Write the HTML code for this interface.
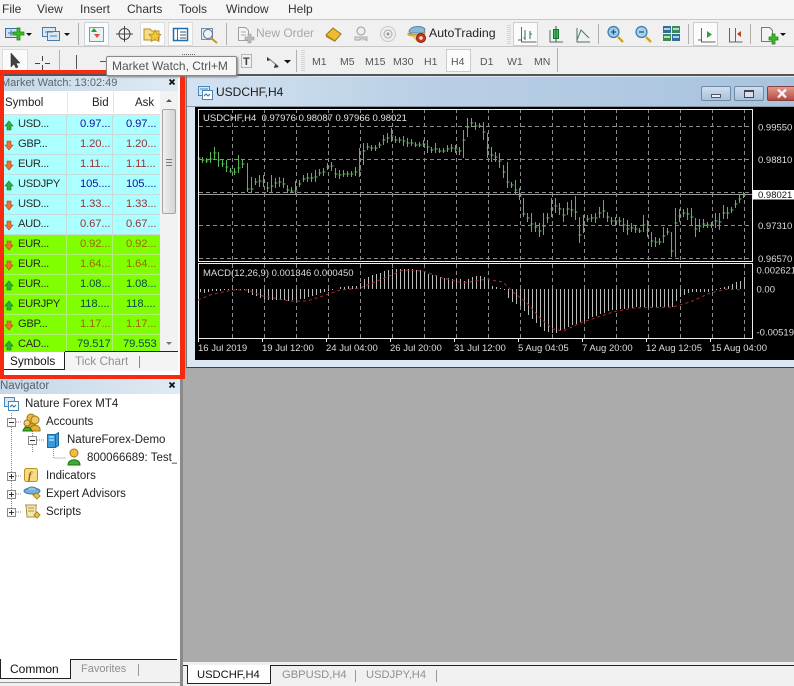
<!DOCTYPE html>
<html><head><meta charset="utf-8"><style>
html,body{margin:0;padding:0}
body{width:794px;height:686px;overflow:hidden;position:relative;background:#f0f0f0;font-family:"Liberation Sans",sans-serif;font-size:12px;color:#222}
.a{position:absolute}
.t{position:absolute;white-space:nowrap;line-height:14px}
.g{color:#8f8f8f}
.n{font-size:11.5px}
.row{position:absolute;left:4px;width:156px;height:20px;box-sizing:border-box;border-bottom:1px solid #c4dcdc}
.row i{position:absolute;top:0;bottom:-1px;width:1px;background:#c4dcdc}
.row span{position:absolute;top:2px;line-height:15px;white-space:nowrap;font-size:11.2px;letter-spacing:-.1px}
.row span:nth-of-type(1){letter-spacing:-.35px;color:#2a2a2a}
.c{background:#aaffff}
.l{background:#80ff00;border-bottom-color:#b0f070}
.l i{background:#b0f070}
.tm{font-size:12px;color:#333}
.fr{font-size:10.5px;color:#555}
</style></head><body>

<!-- menu -->
<div class="a" style="left:0;top:0;width:794px;height:19px;background:#f5f5f5"></div>
<div class="t tm" style="left:2px;top:2px">File</div>
<div class="t tm" style="left:37px;top:2px">View</div>
<div class="t tm" style="left:80px;top:2px">Insert</div>
<div class="t tm" style="left:127px;top:2px">Charts</div>
<div class="t tm" style="left:179px;top:2px">Tools</div>
<div class="t tm" style="left:226px;top:2px">Window</div>
<div class="t tm" style="left:288px;top:2px">Help</div>
<div class="a" style="left:0;top:19px;width:794px;height:1px;background:#c8c8c8"></div>
<div class="a" style="left:0;top:46px;width:794px;height:1px;background:#c8c8c8"></div>
<div class="a" style="left:0;top:74px;width:794px;height:2px;background:#555"></div>

<!-- toolbar svg -->
<svg class="a" style="left:0;top:0" width="794" height="76" viewBox="0 0 794 76">
<g fill="none" stroke-width="1">
<rect x="84.500" y="22.500" width="24" height="23" fill="#fbfbfb" stroke="#c9d6dd"/>
<rect x="140.500" y="22.500" width="24" height="23" fill="#fbfbfb" stroke="#ddd"/>
<rect x="168.500" y="22.500" width="24" height="23" fill="#fbfbfb" stroke="#ddd"/>
<rect x="513.500" y="22.500" width="24" height="23" fill="#fbfbfb" stroke="#ccc"/>
<rect x="693.500" y="22.500" width="24" height="23" fill="#fbfbfb" stroke="#ccc"/>
<rect x="446.500" y="49.500" width="24" height="22" fill="#fbfbfb" stroke="#ccc"/>
<rect x="2.500" y="49.500" width="25" height="23" fill="#fbfbfb" stroke="#ddd"/>
<path d="M78.500 23v22M226.500 23v22M598.500 24v20M688.500 24v20M750.500 24v20M59.500 50v22M296.500 50v22M557.500 48v24" stroke="#b0b0b0"/>
</g>
<rect x="5.500" y="28.500" width="13" height="9" fill="#cfe0f0" stroke="#3a72a8"/>
<path d="M8 33h8M11 30v6" stroke="#3a72a8"/>
<path d="M17 28h3v4h4v3h-4v5h-3v-5h-4v-3h4z" fill="#38c020" stroke="#1b7a10" stroke-width=".7"/>
<path d="M26 33h6l-3 3z" fill="#111"/>
<rect x="42.500" y="27.500" width="13" height="9" fill="#dbe7f2" stroke="#4b7bad"/>
<rect x="47.500" y="31.500" width="12" height="9" fill="#dbe7f2" stroke="#4b7bad"/>
<path d="M45 32h8M50 36h7" stroke="#4b7bad"/>
<path d="M64 33h6l-3 3z" fill="#111"/>
<rect x="89.500" y="27.500" width="14" height="14" fill="#e8f1f8" stroke="#7c9ab5"/>
<path d="M94 28l3 4h-6z" fill="#20a030"/><path d="M97 38l3-4h-6z" fill="#e05020"/>
<circle cx="124.500" cy="34" r="5.500" fill="none" stroke="#444"/>
<path d="M124.500 26v16M116 34h17" stroke="#444"/>
<path d="M144 29h6l2 2h7v9h-15z" fill="#f6dc80" stroke="#b29030"/>
<path d="M155 30l2 4 4 .5-3 3 1 4-4-2-4 2 1-4-3-3 4-.5z" fill="#f0c830" stroke="#a88520" stroke-width=".7"/>
<rect x="173.500" y="28.500" width="14" height="12" fill="#fff" stroke="#1f6fb0" stroke-width="1.500"/>
<path d="M177.500 29v11" stroke="#1f6fb0"/><path d="M180 32h6M180 35h6M180 38h6" stroke="#456"/>
<rect x="201.500" y="28.500" width="11" height="11" fill="#dde6ef" stroke="#7c8da0"/>
<circle cx="208" cy="34" r="4.500" fill="#eef3f8" stroke="#5a7590"/>
<path d="M211 38l6 5" stroke="#c49a20" stroke-width="2"/>
<path d="M238.500 27.500h7l3 3v10h-10z" fill="#f4f4f4" stroke="#a0a0a0"/>
<path d="M241 32h5M241 35h5" stroke="#aaa"/>
<path d="M245 37h3v-3h3v3h3v3h-3v3h-3v-3h-3z" fill="#bbb" stroke="#999" stroke-width=".6"/>
<path d="M326 35l7-7 8 6-6 7z" fill="#eebc30" stroke="#9a7418"/>
<path d="M326 35l9 6 0 1-9-5z" fill="#b08820"/>
<circle cx="361" cy="31" r="4" fill="#eee" stroke="#999"/>
<path d="M355 37h12v3h-12z" fill="#ddd" stroke="#aaa"/>
<path d="M358 41c2-3 7-3 9 0" fill="#e5e5e5" stroke="#aaa"/>
<circle cx="388" cy="34" r="7.500" fill="#eee" stroke="#c8c8c8"/>
<circle cx="388" cy="34" r="4" fill="none" stroke="#aaa"/>
<circle cx="388" cy="34" r="1.500" fill="#999"/>
<path d="M409 31c2-5 12-6 16-2l-1 4h-14z" fill="#8db8d8" stroke="#5b85a8"/>
<path d="M408 33c5 2 12 2 17-1v2c-5 3-12 3-17 1z" fill="#e2b84a" stroke="#a88420" stroke-width=".6"/>
<path d="M412 36l5 6 4-3-3-4z" fill="#e8c860"/>
<circle cx="421" cy="38" r="4.500" fill="#c83820" stroke="#882010"/>
<circle cx="421" cy="38" r="1.800" fill="#f5e5e0"/>
<path d="M508 25v19M510 25v19" stroke="#bbb" stroke-dasharray="1 1"/>
<path d="M302 50v21M304 50v21" stroke="#bbb" stroke-dasharray="1 1"/>
<path d="M521.500 27v15h15M518 40h3" stroke="#5a6a60" fill="none"/>
<path d="M525 30v10M523.500 38h2M530 31v8M530 34h2" stroke="#2f7050" fill="none"/>
<path d="M550 30v12h13" stroke="#5a6a60" fill="none"/>
<rect x="553.500" y="29.500" width="5" height="9" fill="#38c050" stroke="#1a7030"/>
<path d="M556 26v16" stroke="#1a7030"/>
<path d="M577 28v14h13" stroke="#5a6a60" fill="none"/>
<path d="M577 40l4-10 8 8" stroke="#3a8060" fill="none"/>
<circle cx="613.500" cy="32" r="5.500" fill="#9ccbe8" stroke="#3b78ac" stroke-width="1.200"/>
<path d="M611 32h5M613.500 29.500v5" stroke="#1a5a90" stroke-width="1.300"/>
<path d="M618 37l5 5" stroke="#cda526" stroke-width="2.400"/>
<circle cx="641.500" cy="32" r="5.500" fill="#a8d0e8" stroke="#3b78ac" stroke-width="1.200"/>
<path d="M639 32h5" stroke="#1a5a90" stroke-width="1.300"/>
<path d="M646 37l5 5" stroke="#cda526" stroke-width="2.400"/>
<rect x="663" y="26" width="8" height="7" fill="#2f6f9a"/><rect x="672" y="26" width="8" height="7" fill="#3a8a5a"/>
<rect x="663" y="34" width="8" height="7" fill="#3f8a50"/><rect x="672" y="34" width="8" height="7" fill="#2f6f9a"/>
<path d="M664 29h6M673 29h6M664 37h6M673 37h6" stroke="#e8f0f4" stroke-width="1.500"/>
<path d="M701.500 28v14h14M698 40h3" stroke="#5a6a60" fill="none"/>
<path d="M707 31l5 3.500-5 3.500z" fill="#30a040"/>
<path d="M729.500 28v14h13M735.500 28v14" stroke="#5a6a60" fill="none"/>
<path d="M741 31l-4 3 4 3z" fill="#b84020"/>
<path d="M761.500 27.500h8l3 3v11h-11z" fill="#f3f3f3" stroke="#777"/>
<path d="M769 36h3v-3h3v3h3v3h-3v4h-3v-4h-3z" fill="#38c020" stroke="#1b7a10" stroke-width=".7" transform="translate(0,1)"/>
<path d="M780 33h6l-3 3z" fill="#111"/>
<path d="M11 53v14l3-3 2 4 2-1-2-4h4z" fill="#444" stroke="#222" stroke-width=".5"/>
<path d="M42.500 56v5M42.500 65v5M35 63.500h5M45 63.500h5" stroke="#444"/>
<path d="M76.500 55v14" stroke="#555"/>
<path d="M100 61.500h6" stroke="#555"/>
<path d="M182 54.500h13" stroke="#666" stroke-dasharray="1 1"/>
<path d="M241.500 54.500h10v13h-10z" fill="none" stroke="#777" stroke-dasharray="1 1"/>
<text x="243" y="65" font-family="Liberation Sans" font-size="11" font-weight="bold" fill="#444">T</text>
<path d="M267 57l4 3-4 1zM275 64l4 3-5 1z" fill="#333"/>
<path d="M268 58l10 8" stroke="#777"/>
<path d="M284 60h7l-3.500 3.500z" fill="#111"/>
</svg>

<div class="t" style="left:256px;top:26px;color:#a8a8a8;font-size:12px">New Order</div>
<div class="t" style="left:429px;top:26px;color:#222;font-size:12.300px">AutoTrading</div>
<div class="t fr" style="left:312px;top:55px">M1</div>
<div class="t fr" style="left:340px;top:55px">M5</div>
<div class="t fr" style="left:365px;top:55px">M15</div>
<div class="t fr" style="left:393px;top:55px">M30</div>
<div class="t fr" style="left:424px;top:55px">H1</div>
<div class="t fr" style="left:451px;top:55px">H4</div>
<div class="t fr" style="left:480px;top:55px">D1</div>
<div class="t fr" style="left:507px;top:55px">W1</div>
<div class="t fr" style="left:534px;top:55px">MN</div>

<!-- MDI area -->
<div class="a" style="left:183px;top:76px;width:611px;height:586px;background:#ababab"></div>
<div class="a" style="left:186px;top:76px;width:608px;height:292px;background:#dbe8f4;border-left:1px solid #777;border-bottom:1px solid #3a5060;box-sizing:border-box"></div>
<div class="a" style="left:187px;top:77px;width:607px;height:30px;background:linear-gradient(90deg,#d3e2f1 0,#b9cfe5 40%,#a9c3de 100%)"></div>
<div class="a" style="left:187px;top:106px;width:607px;height:1px;background:#8a98a6"></div>
<svg class="a" style="left:197px;top:85px" width="18" height="16"><rect x="1.500" y="1.500" width="11" height="9" fill="#d8e8f5" stroke="#4a86b8"/><rect x="5.500" y="5.500" width="10" height="9" fill="#fff" stroke="#4a86b8"/><path d="M7 11l2-2 2 2 2-2" stroke="#3a6a90" fill="none"/><path d="M3 4h8" stroke="#4a86b8"/></svg>
<div class="t" style="left:216px;top:85px;color:#1a1a1a;font-size:12px">USDCHF,H4</div>
<div class="a" style="left:701px;top:86px;width:30px;height:15px;box-sizing:border-box;border:1px solid #708aa6;border-radius:2px;background:linear-gradient(#cfdfee,#a9c2dc)"></div>
<div class="a" style="left:711px;top:94px;width:10px;height:4px;box-sizing:border-box;border:1px solid #556;background:#eef"></div>
<div class="a" style="left:734px;top:86px;width:30px;height:15px;box-sizing:border-box;border:1px solid #708aa6;border-radius:2px;background:linear-gradient(#cfdfee,#a9c2dc)"></div>
<div class="a" style="left:744px;top:90px;width:10px;height:8px;box-sizing:border-box;border:1px solid #445;border-top-width:2px;background:#dde"></div>
<div class="a" style="left:767px;top:86px;width:30px;height:15px;box-sizing:border-box;border:1px solid #8a4040;border-radius:2px;background:linear-gradient(#e09a90,#b84a40)"></div>
<svg class="a" style="left:776px;top:88px" width="12" height="11"><path d="M2 1.500l8 8M10 1.500l-8 8" stroke="#f3f3f3" stroke-width="2.400"/></svg>

<!-- chart -->
<svg class="a" style="left:195px;top:107px" width="599" height="253" viewBox="195 107 599 253">
<rect x="195" y="107" width="599" height="253" fill="#000"/>
<path d="M232.500 109v152M264.500 109v152M296.500 109v152M328.500 109v152M360.500 109v152M392.500 109v152M424.500 109v152M456.500 109v152M488.500 109v152M520.500 109v152M552.500 109v152M584.500 109v152M616.500 109v152M648.500 109v152M680.500 109v152M712.500 109v152M744.500 109v152M232.500 264v74M264.500 264v74M296.500 264v74M328.500 264v74M360.500 264v74M392.500 264v74M424.500 264v74M456.500 264v74M488.500 264v74M520.500 264v74M552.500 264v74M584.500 264v74M616.500 264v74M648.500 264v74M680.500 264v74M712.500 264v74M744.500 264v74M199 126.500h553M199 159.500h553M199 192.500h553M199 225.500h553M199 258.500h553" stroke="#8c8c8c" stroke-dasharray="4 3" fill="none"/>
<path d="M199 194.500h553" stroke="#9a9a9a"/>
<path stroke="#58b854" fill="none" d="M198.500 153v9m-1-4h3M202.500 157v6m-1-3h3M206.500 158v5m-1-2h3M210.500 152v11m-1-4h3M214.500 147v13m-1-7h3M218.500 152v15m-1-7h3M222.500 159v8m-1-3h3M226.500 160v12m-1-5h3M230.500 168v5m-1-2h3M234.500 168v7m-1-3h3M238.500 155v18m-1-5h3M242.500 160v8m-1-4h3M247.500 163v29m-1-3h3M251.500 177v15m-1-3h3M255.500 178v7m-1-3h3M259.500 175v12m-1-6h3M263.500 175v12m-1-5h3M267.500 182v10m-1-4h3M271.500 175v17m-1-6h3M275.500 178v10m-1-5h3M279.500 177v10m-1-5h3M283.500 178v10m-1-4h3M287.500 185v8m-1-3h3M291.500 187v6m-1-2h3M295.500 181v13m-1-3h3M299.500 180v7m-1-3h3M303.500 175v7m-1-3h3M307.500 173v9m-1-4h3M311.500 173v9m-1-4h3M315.500 170v12m-1-5h3M319.500 169v7m-1-3h3M323.500 168v8m-1-4h3M327.500 163v7m-1-3h3M331.500 162v9m-1-5h3M335.500 168v10m-1-4h3M339.500 170v9m-1-4h3M343.500 170v7m-1-3h3M347.500 171v6m-1-3h3M351.500 171v6m-1-3h3M355.500 167v9m-1-4h3M359.500 148v29m-1-7h3M363.500 143v22m-1-14h3M367.500 143v7m-1-3h3M371.500 145v6m-1-3h3M375.500 145v6m-1-3h3M379.500 142v6m-1-3h3M383.500 135v10m-1-5h3M387.500 133v10m-1-5h3M391.500 128v14m-1-6h3M395.500 136v7m-1-3h3M399.500 137v6m-1-3h3M403.500 136v10m-1-5h3M407.500 138v9m-1-4h3M411.500 139v7m-1-3h3M415.500 142v5m-1-2h3M419.500 142v5m-1-2h3M423.500 140v7m-1-3h3M427.500 140v13m-1-6h3M431.500 147v6m-1-3h3M435.500 143v10m-1-4h3M439.500 148v5m-1-2h3M443.500 148v5m-1-2h3M447.500 145v7m-1-3h3M451.500 144v8m-1-4h3M455.500 145v8m-1-4h3M459.500 147v8m-1-4h3M463.500 130v28m-1-18h3M467.500 118v19m-1-10h3M471.500 118v9m-1-4h3M475.500 122v8m-1-4h3M479.500 123v5m-1-2h3M483.500 122v18m-1-8h3M487.500 133v25m-1-10h3M491.500 147v15m-1-7h3M495.500 152v10m-1-5h3M499.500 153v15m-1-7h3M503.500 165v13m-1-6h3M507.500 162v26m-1-6h3M511.500 182v6m-1-3h3M515.500 180v15m-1-5h3M519.500 188v12m-1-4h3M523.500 198v19m-1-3h3M527.500 213v9m-1-4h3M531.500 213v19m-1-8h3M535.500 222v10m-1-5h3M539.500 223v14m-1-6h3M543.500 213v22m-1-9h3M547.500 213v10m-1-5h3M551.500 198v19m-1-8h3M555.500 198v15m-1-7h3M559.500 203v12m-1-6h3M563.500 208v14m-1-7h3M567.500 202v13m-1-6h3M571.500 200v17m-1-7h3M575.500 196v24m-1-8h3M579.500 217v26m-1-8h3M583.500 215v18m-1-8h3M587.500 215v7m-1-3h3M591.500 214v8m-1-4h3M595.500 213v10m-1-5h3M599.500 207v11m-1-5h3M603.500 200v18m-1-7h3M607.500 212v10m-1-5h3M611.500 217v8m-1-4h3M615.500 217v8m-1-4h3M619.500 217v8m-1-4h3M623.500 218v14m-1-7h3M627.500 220v15m-1-6h3M631.500 223v9m-1-4h3M635.500 225v8m-1-4h3M639.500 228v5m-1-2h3M643.500 215v17m-1-7h3M647.500 220v17m-1-7h3M651.500 232v15m-1-6h3M655.500 237v10m-1-5h3M659.500 238v7m-1-3h3M663.500 227v16m-1-7h3M667.500 228v7m-1-3h3M671.500 232v25m-1-6h3M675.500 208v49m-1-34h3M679.500 209v13m-1-6h3M683.500 209v8m-1-4h3M687.500 208v12m-1-6h3M691.500 208v17m-1-8h3M695.500 218v19m-1-8h3M699.500 219v13m-1-6h3M703.500 219v9m-1-4h3M707.500 222v6m-1-3h3M711.500 222v6m-1-3h3M715.500 213v15m-1-7h3M719.500 213v17m-1-8h3M723.500 205v14m-1-6h3M727.500 207v12m-1-6h3M731.500 207v6m-1-3h3M735.500 200v8m-1-4h3M739.500 194v9m-1-4h3M743.500 192v6m-1-3h3"/>
<path d="M198.500 109.500h554v152h-554zM198.500 263.500h554v75h-554z" fill="none" stroke="#eee"/>
<path d="M198.500 338v4M262.500 338v4M326.500 338v4M390.500 338v4M454.500 338v4M518.500 338v4M582.500 338v4M646.500 338v4M710.500 338v4" stroke="#eee"/>
<path stroke="#bcbcbc" fill="none" d="M200.500 289v3M204.500 289v4M208.500 289v3M212.500 289v2M216.500 289v2M220.500 289v2M224.500 289v1M228.500 289v1M232.500 289v1M236.500 289v1M240.500 289v1M244.500 289v1M248.500 289v4M252.500 289v6M256.500 289v7M260.500 289v9M264.500 289v10M268.500 289v11M272.500 289v11M276.500 289v11M280.500 289v11M284.500 289v11M288.500 289v12M292.500 289v11M296.500 289v11M300.500 289v10M304.500 289v10M308.500 289v8M312.500 289v7M316.500 289v6M320.500 289v4M324.500 289v3M328.500 289v2M332.500 289v1M340.500 287v2M344.500 287v2M348.500 286v3M352.500 286v3M356.500 286v3M360.500 283v6M364.500 279v10M368.500 277v12M372.500 275v14M376.500 274v15M380.500 273v16M384.500 271v18M388.500 270v19M392.500 269v20M396.500 269v20M400.500 269v20M404.500 269v20M408.500 269v20M412.500 269v20M416.500 270v19M420.500 270v19M424.500 272v17M428.500 274v15M432.500 275v14M436.500 276v13M440.500 277v12M444.500 278v11M448.500 278v11M452.500 279v10M456.500 279v10M460.500 279v10M464.500 281v8M468.500 279v10M472.500 277v12M476.500 276v13M480.500 276v13M484.500 277v12M488.500 279v10M492.500 286v3M496.500 287v2M500.500 288v1M504.500 289v1M508.500 289v9M512.500 289v13M516.500 289v15M520.500 289v17M524.500 289v22M528.500 289v26M532.500 289v30M536.500 289v34M540.500 289v38M544.500 289v42M548.500 289v43M552.500 289v44M556.500 289v44M560.500 289v42M564.500 289v40M568.500 289v38M572.500 289v36M576.500 289v35M580.500 289v33M584.500 289v32M588.500 289v30M592.500 289v28M596.500 289v27M600.500 289v25M604.500 289v24M608.500 289v22M612.500 289v21M616.500 289v21M620.500 289v20M624.500 289v20M628.500 289v19M632.500 289v19M636.500 289v18M640.500 289v18M644.500 289v18M648.500 289v18M652.500 289v18M656.500 289v18M660.500 289v18M664.500 289v18M668.500 289v18M672.500 289v18M676.500 289v12M680.500 289v8M684.500 289v6M688.500 289v4M692.500 289v3M696.500 289v3M700.500 289v3M704.500 289v3M708.500 289v3M712.500 289v2M716.500 289v1M720.500 288v1M724.500 287v2M728.500 286v3M732.500 284v5M736.500 282v7M740.500 281v8M744.500 277v12"/>
<polyline fill="none" stroke="#b02a2a" stroke-dasharray="3 3" points="198,300 210,295 232,290 247,290 263,296 290,301 307,301 323,296 340,290 360,288 380,280 403,270 423,271 443,278 463,283 487,279 490,280 503,282 513,292 527,303 540,318 553,329 563,331 583,322 613,312 633,308 673,307 690,302 710,293 727,289 743,290"/>
<g font-family="Liberation Sans" font-size="9.500" fill="#dcdcdc">
<text x="203" y="121" fill="#e4e4e4">USDCHF,H4&#160; 0.97976 0.98087 0.97966 0.98021</text>
<text x="203" y="276">MACD(12,26,9) 0.001346 0.000450</text>
<text x="198" y="351">16 Jul 2019</text>
<text x="262" y="351">19 Jul 12:00</text>
<text x="326" y="351">24 Jul 04:00</text>
<text x="390" y="351">26 Jul 20:00</text>
<text x="454" y="351">31 Jul 12:00</text>
<text x="518" y="351">5 Aug 04:05</text>
<text x="582" y="351">7 Aug 20:00</text>
<text x="646" y="351">12 Aug 12:05</text>
<text x="711" y="351">15 Aug 04:00</text>
<text x="758" y="130.500">0.99550</text>
<text x="758" y="163">0.98810</text>
<text x="758" y="229">0.97310</text>
<text x="758" y="262">0.96570</text>
<text x="756.500" y="273.500">0.002621</text>
<text x="756.500" y="292.500">0.00</text>
<text x="756.500" y="335.500">-0.005191</text>
<rect x="753" y="190" width="41" height="9.500" fill="#fff"/>
<text x="758" y="198" fill="#111">0.98021</text>
</g>
</svg>
<div class="a" style="left:187px;top:360px;width:607px;height:8px;background:#dbe8f4;border-bottom:1px solid #2e4452;box-sizing:border-box"></div>

<!-- bottom tabs -->
<div class="a" style="left:183px;top:662px;width:611px;height:24px;background:#f0f0f0"></div>
<div class="a" style="left:183px;top:665px;width:4px;height:1px;background:#222"></div>
<div class="a" style="left:187px;top:665px;width:84px;height:19px;background:#fff;box-sizing:border-box;border-left:1px solid #222;border-right:1px solid #222;border-bottom:1px solid #222"></div>
<div class="a" style="left:271px;top:665px;width:523px;height:1px;background:#222"></div>
<div class="t" style="left:197px;top:668px;color:#111;font-size:11.200px">USDCHF,H4</div>
<div class="t g" style="left:282px;top:668px;font-size:11.200px">GBPUSD,H4</div>
<div class="a" style="left:355px;top:670px;width:1px;height:12px;background:#999"></div>
<div class="t g" style="left:366px;top:668px;font-size:11.200px">USDJPY,H4</div>
<div class="a" style="left:436px;top:670px;width:1px;height:12px;background:#999"></div>

<!-- Market watch panel -->
<div class="a" style="left:0;top:76px;width:180px;height:302px;background:#fff"></div>
<div class="a" style="left:4px;top:76px;width:174px;height:15px;background:linear-gradient(90deg,#c6d8e8,#dfeaf3)"></div>
<div class="t" style="left:1px;top:76px;color:#5c6670;font-size:11px">Market Watch: 13:02:49</div>
<svg class="a" style="left:168px;top:78px" width="9" height="9"><path d="M1.500 1.500l5 5M6.500 1.500l-5 5" stroke="#111" stroke-width="1.800"/></svg>
<div class="a" style="left:4px;top:91px;width:156px;height:24px;background:#fff;border-bottom:1px solid #dcdcdc;box-sizing:border-box"></div>
<div class="a" style="left:67px;top:92px;width:1px;height:21px;background:#e4e4e4"></div>
<div class="a" style="left:113px;top:92px;width:1px;height:21px;background:#e4e4e4"></div>
<div class="t" style="left:5px;top:96px;color:#222;font-size:11.500px">Symbol</div>
<div class="t" style="left:92px;top:96px;color:#222;font-size:11.500px">Bid</div>
<div class="t" style="left:135px;top:96px;color:#222;font-size:11.500px">Ask</div>

<div class="row c" style="top:115px"><i style="left:62px"></i><i style="left:108px"></i><span style="left:14px">USD...</span><span style="left:76px;color:#1010a0">0.97...</span><span style="left:122px;color:#1010a0">0.97...</span></div>
<div class="row c" style="top:135px"><i style="left:62px"></i><i style="left:108px"></i><span style="left:14px">GBP...</span><span style="left:76px;color:#a03038">1.20...</span><span style="left:122px;color:#a03038">1.20...</span></div>
<div class="row c" style="top:155px"><i style="left:62px"></i><i style="left:108px"></i><span style="left:14px">EUR...</span><span style="left:76px;color:#a03038">1.11...</span><span style="left:122px;color:#a03038">1.11...</span></div>
<div class="row c" style="top:175px"><i style="left:62px"></i><i style="left:108px"></i><span style="left:14px">USDJPY</span><span style="left:76px;color:#1010a0">105....</span><span style="left:122px;color:#1010a0">105....</span></div>
<div class="row c" style="top:195px"><i style="left:62px"></i><i style="left:108px"></i><span style="left:14px">USD...</span><span style="left:76px;color:#a03038">1.33...</span><span style="left:122px;color:#a03038">1.33...</span></div>
<div class="row c" style="top:215px"><i style="left:62px"></i><i style="left:108px"></i><span style="left:14px">AUD...</span><span style="left:76px;color:#a03038">0.67...</span><span style="left:122px;color:#a03038">0.67...</span></div>
<div class="row l" style="top:235px"><i style="left:62px"></i><i style="left:108px"></i><span style="left:14px">EUR...</span><span style="left:76px;color:#9a6a00">0.92...</span><span style="left:122px;color:#9a6a00">0.92...</span></div>
<div class="row l" style="top:255px"><i style="left:62px"></i><i style="left:108px"></i><span style="left:14px">EUR...</span><span style="left:76px;color:#9a6a00">1.64...</span><span style="left:122px;color:#9a6a00">1.64...</span></div>
<div class="row l" style="top:275px"><i style="left:62px"></i><i style="left:108px"></i><span style="left:14px">EUR...</span><span style="left:76px;color:#0a4a50">1.08...</span><span style="left:122px;color:#0a4a50">1.08...</span></div>
<div class="row l" style="top:295px"><i style="left:62px"></i><i style="left:108px"></i><span style="left:14px">EURJPY</span><span style="left:76px;color:#0a4a50">118....</span><span style="left:122px;color:#0a4a50">118....</span></div>
<div class="row l" style="top:315px"><i style="left:62px"></i><i style="left:108px"></i><span style="left:14px">GBP...</span><span style="left:76px;color:#9a6a00">1.17...</span><span style="left:122px;color:#9a6a00">1.17...</span></div>
<div class="row l" style="top:335px;height:17px;border-bottom:0"><i style="left:62px"></i><i style="left:108px"></i><span style="left:14px">CAD...</span><span style="left:73px;color:#0a4a50">79.517</span><span style="left:119px;color:#0a4a50">79.553</span></div>

<svg class="a" style="left:4px;top:115px" width="12" height="238">
<g stroke-width=".6">
<path d="M5 7l4 5h-2v4h-4v-4h-2z" fill="#30b040" stroke="#167020" transform="translate(0,-1)"/>
<path d="M3 24h4v4h2l-4 5-4-5h2z" fill="#f07030" stroke="#b04010" transform="translate(0,2)"/>
<path d="M3 44h4v4h2l-4 5-4-5h2z" fill="#f07030" stroke="#b04010" transform="translate(0,2)"/>
<path d="M5 67l4 5h-2v4h-4v-4h-2z" fill="#30b040" stroke="#167020" transform="translate(0,-1)"/>
<path d="M3 84h4v4h2l-4 5-4-5h2z" fill="#f07030" stroke="#b04010" transform="translate(0,2)"/>
<path d="M3 104h4v4h2l-4 5-4-5h2z" fill="#f07030" stroke="#b04010" transform="translate(0,2)"/>
<path d="M3 124h4v4h2l-4 5-4-5h2z" fill="#f07030" stroke="#b04010" transform="translate(0,2)"/>
<path d="M3 144h4v4h2l-4 5-4-5h2z" fill="#f07030" stroke="#b04010" transform="translate(0,2)"/>
<path d="M5 167l4 5h-2v4h-4v-4h-2z" fill="#30b040" stroke="#167020" transform="translate(0,-1)"/>
<path d="M5 187l4 5h-2v4h-4v-4h-2z" fill="#30b040" stroke="#167020" transform="translate(0,-1)"/>
<path d="M3 204h4v4h2l-4 5-4-5h2z" fill="#f07030" stroke="#b04010" transform="translate(0,2)"/>
<path d="M5 227l4 5h-2v4h-4v-4h-2z" fill="#30b040" stroke="#167020" transform="translate(0,-1)"/>
</g></svg>

<!-- scrollbar -->
<div class="a" style="left:160px;top:91px;width:18px;height:261px;background:#f2f2f2"></div>
<div class="a" style="left:162px;top:109px;width:14px;height:105px;box-sizing:border-box;border:1px solid #a5a5a5;border-radius:2px;background:linear-gradient(90deg,#efefef,#d4d4d4)"></div>
<svg class="a" style="left:160px;top:91px" width="18" height="261"><path d="M6 11l3-3 3 3z" fill="#555"/><path d="M6 68.500h6M6 71.500h6M6 74.500h6" stroke="#777"/><path d="M6 251l3 3 3-3z" fill="#777"/></svg>

<!-- mw tabs -->
<div class="a" style="left:65px;top:351px;width:113px;height:1px;background:#222"></div>
<div class="a" style="left:4px;top:352px;width:61px;height:18px;box-sizing:border-box;background:#fff;border-right:1px solid #222;border-bottom:1px solid #222"></div>
<div class="a" style="left:65px;top:352px;width:113px;height:19px;background:#f4f4f4"></div>
<div class="t" style="left:10px;top:354px;color:#111;font-size:11.800px">Symbols</div>
<div class="t g" style="left:75px;top:354px;font-size:11.800px">Tick Chart</div>
<div class="a" style="left:139px;top:356px;width:1px;height:12px;background:#888"></div>

<!-- red frame -->
<div class="a" style="left:0;top:70px;width:185px;height:309px;box-sizing:border-box;border:4px solid #f7290f;border-left-width:4px;border-right-width:5px"></div>

<!-- navigator -->
<div class="a" style="left:0;top:379px;width:180px;height:15px;background:linear-gradient(90deg,#c6d8e8,#dfeaf3)"></div>
<div class="t" style="left:0;top:379px;color:#56606a;font-size:11.500px">Navigator</div>
<svg class="a" style="left:168px;top:381px" width="9" height="9"><path d="M1.500 1.500l5 5M6.500 1.500l-5 5" stroke="#111" stroke-width="1.800"/></svg>
<div class="a" style="left:0;top:394px;width:180px;height:266px;background:#fff"></div>
<div class="a" style="left:180px;top:379px;width:3px;height:307px;background:#8a8a8a"></div>
<div class="t n" style="left:25px;top:397px;color:#222">Nature Forex MT4</div>
<div class="t n" style="left:46px;top:415px;color:#222">Accounts</div>
<div class="t n" style="left:67px;top:433px;color:#222">NatureForex-Demo</div>
<div class="t n" style="left:87px;top:451px;width:90px;overflow:hidden;color:#222">800066689: Test_.</div>
<div class="t n" style="left:46px;top:469px;color:#222">Indicators</div>
<div class="t n" style="left:46px;top:487px;color:#222">Expert Advisors</div>
<div class="t n" style="left:46px;top:505px;color:#222">Scripts</div>
<svg class="a" style="left:0;top:394px" width="180" height="130" viewBox="0 394 180 130">
<path d="M11.500 413v99M32.500 431v22M53.500 449v9h12M16 422h6M37 440h8M16 476h6M16 494h6M16 512h6" stroke="#888" stroke-dasharray="1 1" fill="none"/>
<rect x="4.500" y="397.500" width="10" height="9" fill="#d8e8f5" stroke="#4a86b8"/><rect x="8.500" y="401.500" width="10" height="9" fill="#fff" stroke="#4a86b8"/><path d="M10 407l2-2 2 2 2-2" stroke="#3a6a90" fill="none"/>
<g fill="#f8f8f8" stroke="#8a8a8a">
<rect x="7.500" y="418.500" width="8" height="8"/><rect x="28.500" y="436.500" width="8" height="8"/><rect x="7.500" y="472.500" width="8" height="8"/><rect x="7.500" y="490.500" width="8" height="8"/><rect x="7.500" y="508.500" width="8" height="8"/>
</g>
<path d="M9 422.500h5M30 440.500h5M9 476.500h5M11.500 474v5M9 494.500h5M11.500 492v5M9 512.500h5M11.500 510v5" stroke="#333"/>
<circle cx="31" cy="418" r="4" fill="#e8b840" stroke="#a07818"/><path d="M25 427c1-5 10-5 12 0v2h-12z" fill="#dca020" stroke="#a07818"/>
<circle cx="35" cy="420" r="4" fill="#f0c860" stroke="#a07818"/><path d="M30 429c1-5 9-5 10 0v2h-10z" fill="#e8b030" stroke="#a07818"/>
<circle cx="27" cy="423" r="3" fill="#f0d080" stroke="#a07818"/><path d="M23 431c1-5 7-5 9 0z" fill="#40b030" stroke="#207010"/>
<path d="M47.500 434.500h8l3-2v13l-3 2h-8z" fill="#3a9ad8" stroke="#1a6aa0"/><path d="M49 437h5M49 440h5" stroke="#dff"/><path d="M55.500 434.500v13" stroke="#1a6aa0"/>
<circle cx="74" cy="453" r="4" fill="#f0c040" stroke="#a07818"/><path d="M68 465c0-7 12-7 12 0z" fill="#38b030" stroke="#207010"/>
<rect x="24.500" y="468.500" width="13" height="13" rx="2" fill="#f6dc80" stroke="#b89428"/>
<text x="28" y="479" font-family="Liberation Serif" font-style="italic" font-weight="bold" font-size="11" fill="#a06010">f</text>
<ellipse cx="32" cy="491" rx="8" ry="3" fill="#78b0d8" stroke="#3a78a8"/><path d="M27 490c1-4 9-4 10 0" fill="#98c4e4" stroke="#3a78a8"/><path d="M33 495l4 4 3-3-3-3z" fill="#e8c850" stroke="#a88820"/>
<path d="M26 505h10v12h-9z" fill="#f4e8b0" stroke="#a89040"/><path d="M25 505h12M28 508h6M28 511h6" stroke="#a89040"/><path d="M34 515l3 3 3-3-3-3z" fill="#e8c850" stroke="#a88820"/>
</svg>

<!-- nav tabs -->
<div class="a" style="left:0;top:660px;width:180px;height:22px;background:#f2f2f2"></div>
<div class="a" style="left:71px;top:659px;width:106px;height:1px;background:#222"></div>
<div class="a" style="left:0;top:659px;width:71px;height:20px;box-sizing:border-box;background:#fff;border-left:1px solid #222;border-right:1px solid #222;border-bottom:1px solid #222"></div>
<div class="t" style="left:10px;top:662px;color:#111">Common</div>
<div class="t g" style="left:81px;top:662px;font-size:11px">Favorites</div>
<div class="a" style="left:138px;top:664px;width:1px;height:12px;background:#999"></div>
<div class="a" style="left:0;top:682px;width:183px;height:1px;background:#999"></div>

<!-- tooltip -->
<div class="a" style="left:106px;top:56px;width:131px;height:20px;box-sizing:border-box;background:#f6f6f6;border:1px solid #8a8a8a;border-radius:2px;box-shadow:1px 1px 2px #777"></div>
<div class="t" style="left:112px;top:59px;color:#555;font-size:12px">Market Watch, Ctrl+M</div>
</body></html>
